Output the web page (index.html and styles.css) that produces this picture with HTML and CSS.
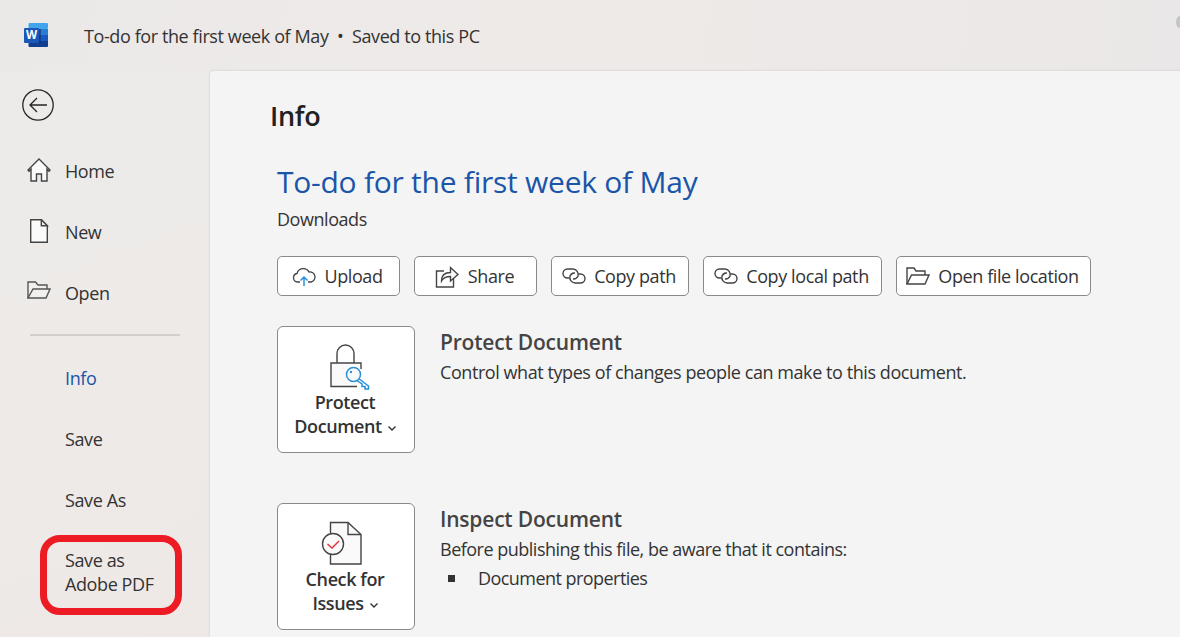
FILE: index.html
```html
<!DOCTYPE html>
<html lang="en">
<head>
<meta charset="utf-8">
<title>To-do for the first week of May</title>
<link rel="stylesheet" href="styles.css">
</head>
<body>
<div class="app">
  <header class="titlebar">
    <svg class="word-logo" viewBox="0 0 24 24" width="24" height="24">
      <rect x="4.500" y="0" width="19.500" height="6" rx="1" fill="#41a5ee"/>
      <rect x="4.500" y="6" width="19.500" height="6" fill="#2b7cd3"/>
      <rect x="4.500" y="12" width="19.500" height="6" fill="#185abd"/>
      <path d="M4.500 18H24v5a1 1 0 0 1-1 1H5.500a1 1 0 0 1-1-1z" fill="#103f91"/>
      <rect x="15" y="6" width="1.800" height="14" fill="#0e2f6e" opacity=".7"/>
      <rect x="0" y="5" width="15" height="15" rx="1" fill="#1b57b8"/>
      <text x="7.500" y="16.200" class="word-w">W</text>
    </svg>
    <span class="doc-title">To-do for the first week of May &nbsp;•&nbsp; Saved to this PC</span>
    <span class="edge-dot"></span>
  </header>
  <div class="content">
    <nav class="sidebar">
      <svg class="back" viewBox="0 0 32 32" width="32" height="32" fill="none" stroke="#262626" stroke-width="1.300">
        <circle cx="16" cy="16" r="15.200"/>
        <path d="M25 16H8M15 9l-7 7 7 7"/>
      </svg>
      <ul class="nav-list">
        <li class="nav-item">
          <svg class="nav-icon" viewBox="0 0 24 24" width="24" height="24" fill="#fafafa" stroke="#444" stroke-width="1.400">
            <path d="M12 1 1 12l1 1.200 2-2V23h5.500v-7h5v7H20V11.200l2 2 1-1.200z"/>
          </svg>
          <span>Home</span>
        </li>
        <li class="nav-item">
          <svg class="nav-icon" viewBox="0 0 24 24" width="24" height="24" fill="#fafafa" stroke="#444" stroke-width="1.400">
            <path d="M3.700 .7h10.600l6 6.100v16.500H3.700z"/><path d="M14.300 .7v6.100h6z" fill="#eee"/>
          </svg>
          <span>New</span>
        </li>
        <li class="nav-item">
          <svg class="nav-icon" viewBox="0 0 24 24" width="24" height="24" fill="#f2f0ee" stroke="#555" stroke-width="1.400">
            <path d="M1 18V2h7.500l2.500 3h9v4"/><path d="M1 18l5-9h17l-4 9z"/>
          </svg>
          <span>Open</span>
        </li>
      </ul>
      <div class="nav-divider"></div>
      <ul class="nav-list">
        <li class="nav-item text-only active"><span>Info</span></li>
        <li class="nav-item text-only"><span>Save</span></li>
        <li class="nav-item text-only"><span>Save As</span></li>
        <li class="nav-item text-only two-line"><span>Save as<br>Adobe PDF</span><div class="red-ring"></div></li>
      </ul>
    </nav>
    <main class="main">
      <h1 class="page-title">Info</h1>
      <h2 class="doc-name">To-do for the first week of May</h2>
      <p class="location">Downloads</p>
      <div class="actions">
        <button class="pill w-upload">
          <svg viewBox="0 0 24 20" width="24" height="20" fill="none" stroke="#444" stroke-width="1.300">
            <path d="M8 16H5.500a4.300 4.300 0 0 1-.5-8.500A6.500 6.500 0 0 1 17 6a5.100 5.100 0 0 1 2 10h-3"/>
            <path d="M12 20V11M8.500 14.500 12 11l3.500 3.500" stroke="#2a8fd8" stroke-width="1.500"/>
          </svg>Upload
        </button>
        <button class="pill w-share">
          <svg viewBox="0 0 24 24" width="24" height="24" fill="none" stroke="#444" stroke-width="1.400">
            <path d="M9 7H1.500v16h17v-8"/><path d="M6.500 17c0-5.500 3-8.500 9-8.500V3.500l7.500 7-7.500 6.500v-4.500c-4 0-7 1-9 4.500z" fill="#fafafa"/>
          </svg>Share
        </button>
        <button class="pill w-copy">
          <svg viewBox="0 0 24 16" width="24" height="16" fill="none" stroke="#444" stroke-width="1.400">
            <path d="M7 10H5.500A4.500 4.500 0 0 1 5.500 1H11a5.500 5.500 0 0 1 5 7 5 5 0 0 1-5 3"/>
            <path d="M17 6h1.500a4.500 4.500 0 0 1 0 9H13a5.500 5.500 0 0 1-5-7 5 5 0 0 1 5-3"/>
          </svg>Copy path
        </button>
        <button class="pill w-local">
          <svg viewBox="0 0 24 16" width="24" height="16" fill="none" stroke="#444" stroke-width="1.400">
            <path d="M7 10H5.500A4.500 4.500 0 0 1 5.500 1H11a5.500 5.500 0 0 1 5 7 5 5 0 0 1-5 3"/>
            <path d="M17 6h1.500a4.500 4.500 0 0 1 0 9H13a5.500 5.500 0 0 1-5-7 5 5 0 0 1 5-3"/>
          </svg>Copy local path
        </button>
        <button class="pill w-open">
          <svg viewBox="0 0 24 18" width="24" height="18" fill="none" stroke="#444" stroke-width="1.400">
            <path d="M1 17V1h7l2 3h9v4"/><path d="M1 17l4.500-9H23l-4 9z"/>
          </svg>Open file location
        </button>
      </div>
      <section class="block">
        <button class="tile">
          <svg viewBox="0 0 50 46" width="50" height="46" fill="none" stroke="#444" stroke-width="1.400">
            <path d="M16 19V9.500a8.500 8.500 0 0 1 17 0V19"/>
            <path d="M36 42.500H10V19h30v6" fill="#fafafa"/>
            <g stroke="#2a8fd8" stroke-width="1.500" fill="#fafafa">
              <path d="M37 34 47.500 42v3h-3.500v-2.500h-3V40l-6-4z"/>
              <circle cx="32.500" cy="30.500" r="7"/>
            </g>
            <circle cx="30" cy="28" r="1.200" fill="#2a8fd8" stroke="none"/>
          </svg>
          <span class="tile-label">Protect<br>Document<svg class="chev" viewBox="0 0 8 5" width="8" height="5" fill="none" stroke="#333" stroke-width="1.400"><path d="M.5.5 4 4 7.500.5"/></svg></span>
        </button>
        <div class="block-text">
          <h3>Protect Document</h3>
          <p>Control what types of changes people can make to this document.</p>
        </div>
      </section>
      <section class="block">
        <button class="tile">
          <svg viewBox="0 0 50 46" width="50" height="46" fill="none" stroke="#444" stroke-width="1.400">
            <path d="M9.500 12V1.500H27L40 13.500V43H9.500V32" fill="#fafafa"/>
            <path d="M27 1.500v12h13"/>
            <circle cx="12" cy="23" r="10.500" fill="#fafafa"/>
            <path d="M6.500 23l4.500 4 7-7" stroke="#e8333c" stroke-width="1.500"/>
          </svg>
          <span class="tile-label">Check for<br>Issues<svg class="chev" viewBox="0 0 8 5" width="8" height="5" fill="none" stroke="#333" stroke-width="1.400"><path d="M.5.5 4 4 7.500.5"/></svg></span>
        </button>
        <div class="block-text">
          <h3>Inspect Document</h3>
          <p class="tight">Before publishing this file, be aware that it contains:</p>
          <ul class="props"><li>Document properties</li></ul>
        </div>
      </section>
    </main>
  </div>
</div>
</body>
</html>
```

FILE: styles.css
```css
* { box-sizing: border-box; }
html, body { margin: 0; height: 100%; }
body {
  overflow: hidden;
  font-family: "Open Sans", "Noto Sans", sans-serif;
  color: #333;
  background: linear-gradient(100deg, #ebe9e8 0%, #eeeae8 45%, #ebe8e7 85%, #e7e6e8 100%);
}
.app { display: flex; flex-direction: column; height: 637px; width: 1180px; overflow: hidden; }
.titlebar {
  position: relative;
  height: 71px;
  flex: none;
  display: flex;
  align-items: center;
  padding: 0 0 0 24px;
}
.word-logo { flex: none; margin-top: -1px; }
.word-w { font: 700 11.500px "Open Sans", sans-serif; fill: #fff; text-anchor: middle; }
.doc-title { margin-left: 36px; font-size: 18px; letter-spacing: -0.4px; color: #333; white-space: nowrap; }
.edge-dot { position: absolute; right: -4px; top: 16px; width: 8px; height: 12px; border-radius: 50%; background: #c4c4c4; }
.content { flex: 1; display: flex; min-height: 0; }
.sidebar { width: 210px; flex: none; padding: 18px 0 0 22px; background: linear-gradient(160deg, #ecebe9 0%, #eeeae8 60%, #eee9e6 100%); }
.back { display: block; margin-bottom: 20px; }
.nav-list { list-style: none; margin: 0; padding: 0; }
.nav-item {
  position: relative;
  height: 61px;
  display: flex;
  align-items: center;
  gap: 14px;
  padding: 0 0 2px 5px;
  font-size: 18px;
  letter-spacing: -0.4px;
  color: #333;
}
.nav-icon { flex: none; margin-top: -1px; }
.nav-divider { width: 150px; height: 2px; margin: 10px 0 12px 8px; background: #d0cfcd; }
.text-only { padding-left: 43px; }
.active { color: #1b55a8; }
.two-line { height: 90px; line-height: 24px; align-items: flex-start; padding-top: 17px; }
.red-ring {
  position: absolute;
  left: 18px;
  top: 4px;
  width: 142px;
  height: 80px;
  border: 7.500px solid #ed1c24;
  border-radius: 20px;
}
.main {
  flex: 1;
  background: #f4f4f4;
  border-top-left-radius: 4px;
  box-shadow: 0 0 3px rgba(0, 0, 0, .12);
  padding: 25px 0 0 67px;
  min-width: 0;
}
.page-title { margin: 0 0 0 -7px; font-size: 27px; line-height: 40px; font-weight: 600; color: #222; letter-spacing: -0.3px; }
.doc-name { margin: 24px 0 0; font-size: 30px; line-height: 44px; font-weight: 400; color: #1b55a8; letter-spacing: -0.25px; white-space: nowrap; }
.location { margin: 3px 0 0; font-size: 18px; line-height: 24px; letter-spacing: -0.45px; color: #333; }
.actions { display: flex; gap: 14px; margin-top: 25px; }
.pill {
  height: 40px;
  display: flex;
  align-items: center;
  justify-content: center;
  gap: 8px;
  padding: 0 2px 0 0;
  background: #fff;
  border: 1px solid #8a8a8a;
  border-radius: 5px;
  font: 400 18px "Open Sans", sans-serif;
  letter-spacing: -0.4px;
  color: #333;
  white-space: nowrap;
}
.w-upload { width: 123px; }
.w-share { width: 123px; gap: 9px; }
.w-copy { width: 138px; }
.w-local { width: 179px; }
.w-open { width: 195px; }
.block { display: flex; align-items: flex-start; gap: 25px; height: 127px; }
.block:first-of-type { margin-top: 30px; }
.block + .block { margin-top: 50px; }
.tile {
  width: 138px;
  height: 127px;
  flex: none;
  display: flex;
  flex-direction: column;
  align-items: center;
  padding: 17px 2px 0 0;
  background: #fff;
  border: 1px solid #8a8a8a;
  border-radius: 6px;
  font: 600 18px "Open Sans", sans-serif;
  letter-spacing: -0.4px;
  color: #333;
}
.tile svg:first-child { margin-left: 2px; }
.tile-label { line-height: 24px; margin-top: 0; text-align: center; }
.chev { margin-left: 6px; vertical-align: 2px; }
.block-text { padding-top: 2px; }
.block-text h3 { margin: 0; font-size: 21px; line-height: 28px; font-weight: 600; letter-spacing: -0.2px; color: #444; }
.block-text p { margin: 4px 0 0; font-size: 18px; line-height: 24px; letter-spacing: -0.43px; color: #333; white-space: nowrap; }
.block-text .tight { letter-spacing: -0.5px; }
.props { list-style: none; margin: 5px 0 0; padding: 0 0 0 38px; position: relative; font-size: 18px; line-height: 24px; letter-spacing: -0.55px; }
.props li::before { content: ""; position: absolute; left: 8px; top: 9px; width: 7px; height: 7px; background: #333; }
```
